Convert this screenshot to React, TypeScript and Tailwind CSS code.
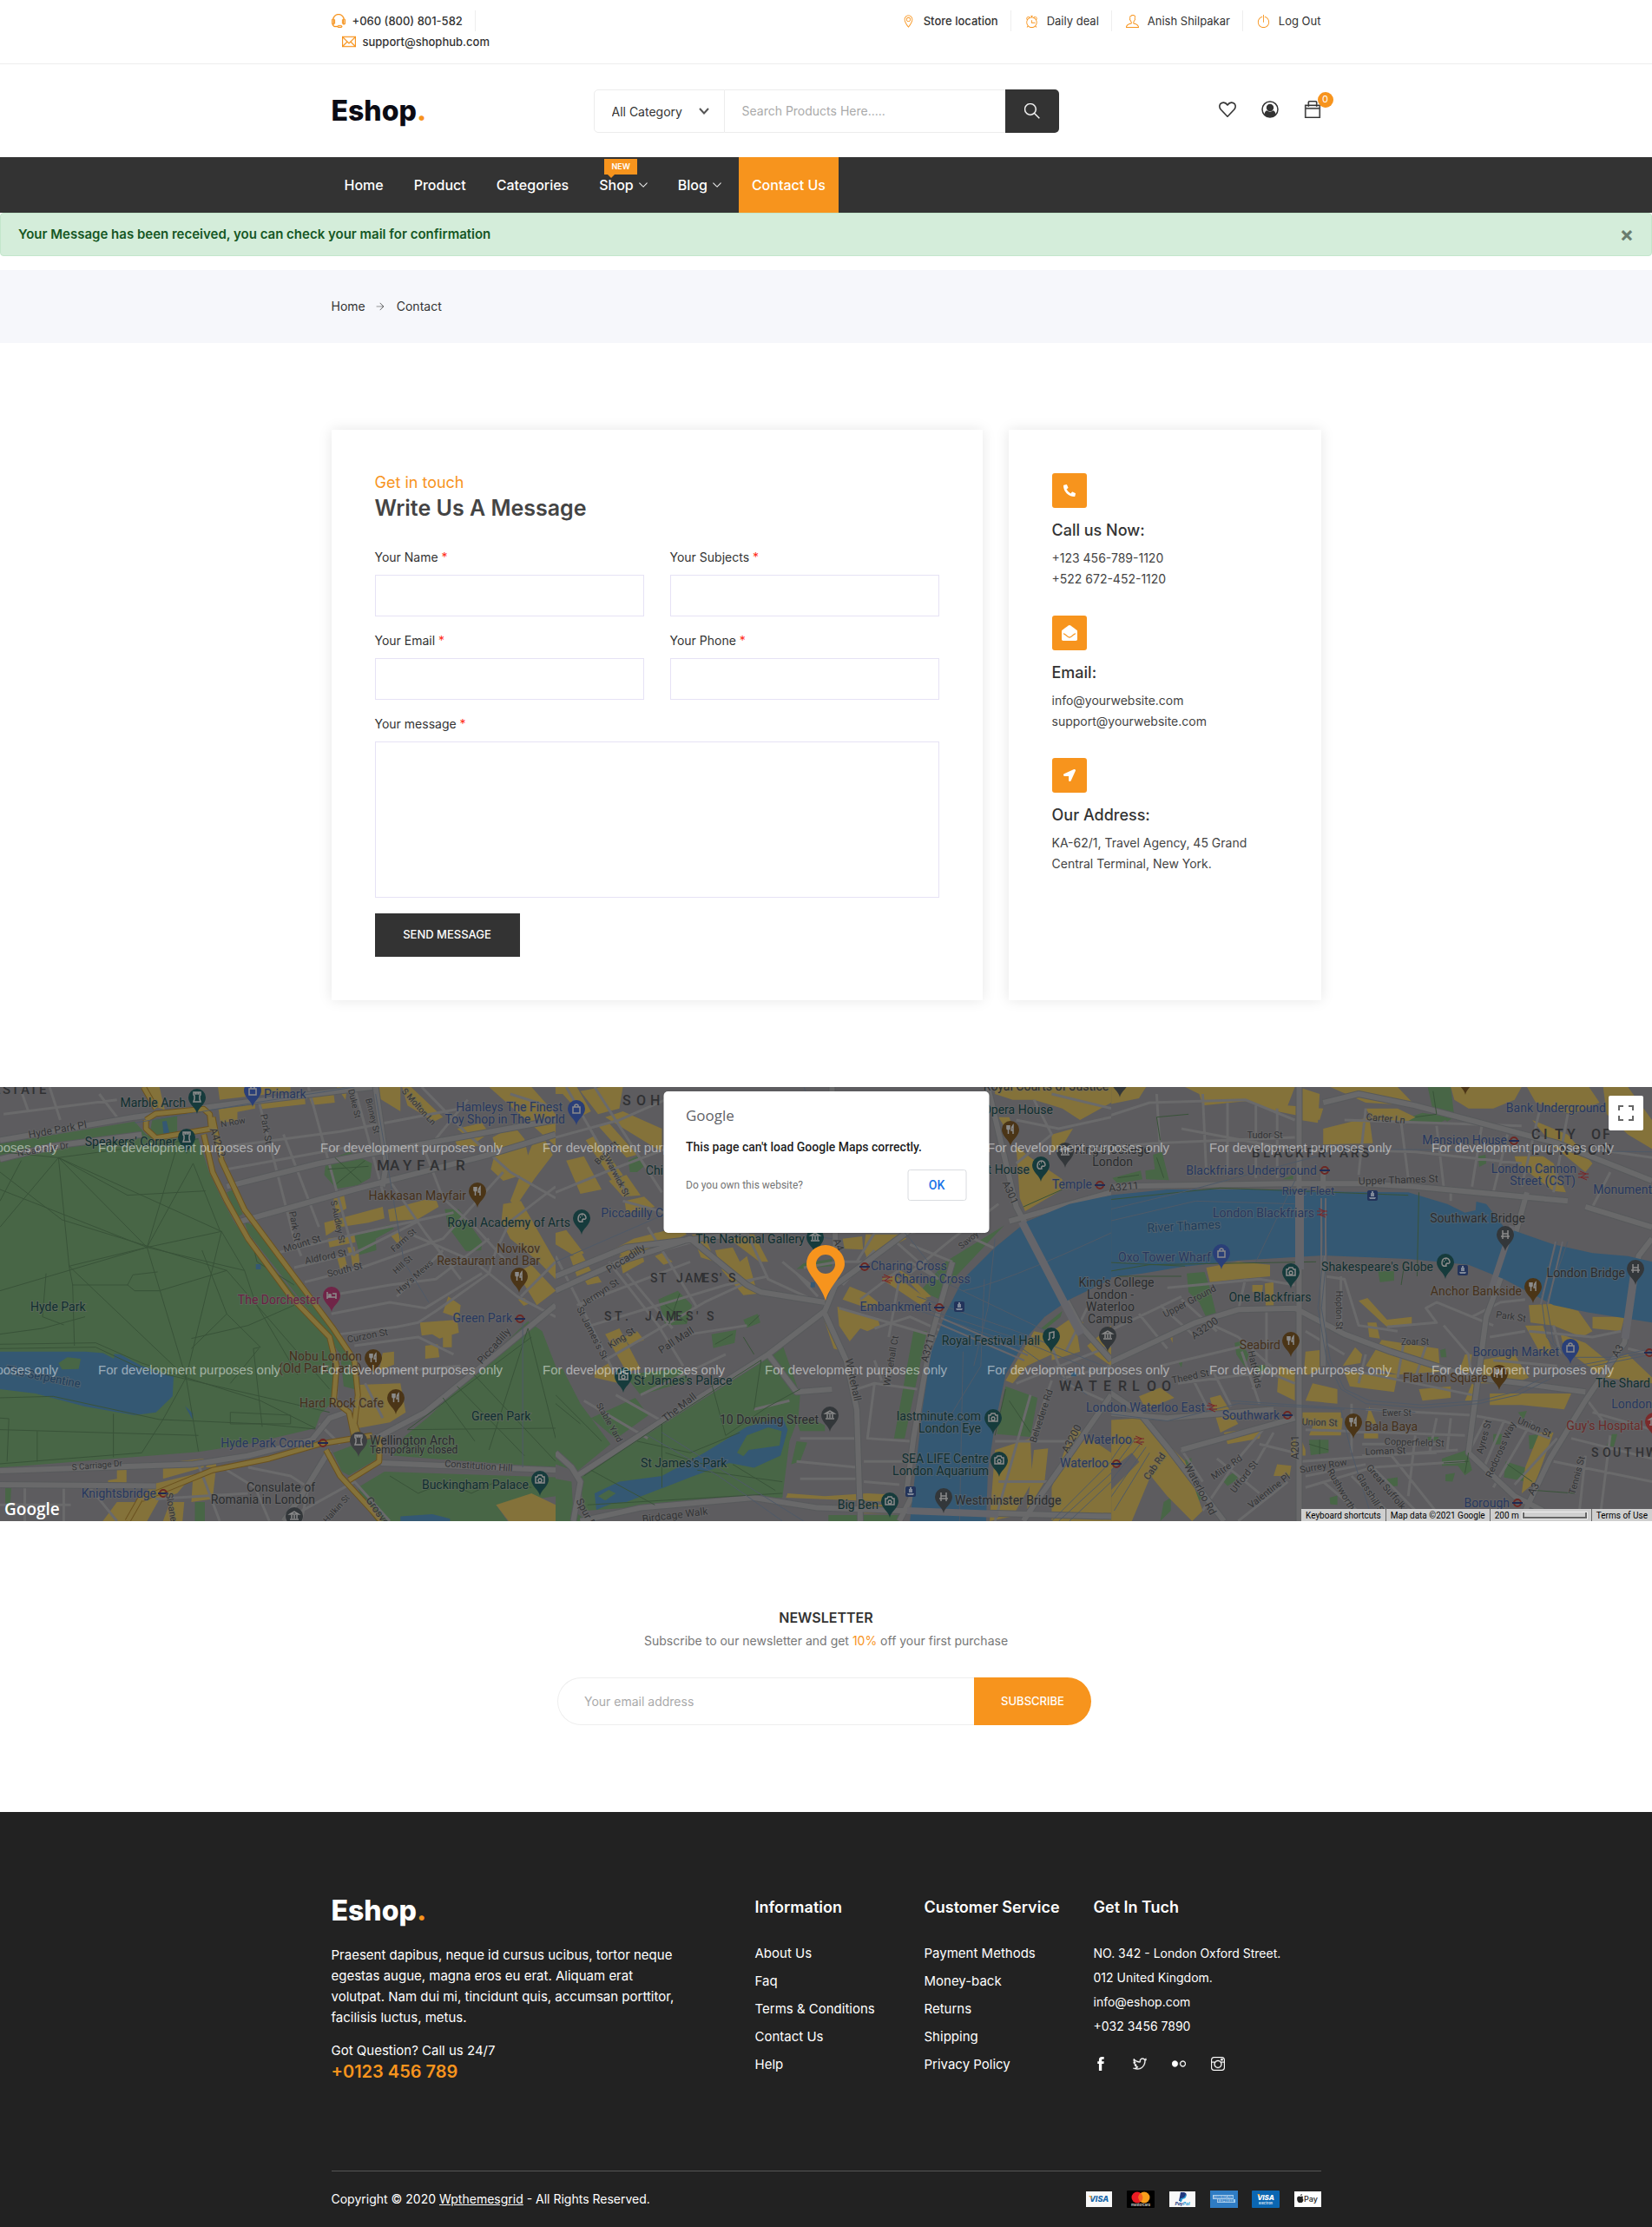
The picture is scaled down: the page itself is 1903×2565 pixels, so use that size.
import React from "react";
import {
  TfiAlarmClock,
  TfiAngleDown,
  TfiArrowRight,
  TfiBag,
  TfiEmail,
  TfiFacebook,
  TfiFlickr,
  TfiHeadphoneAlt,
  TfiInstagram,
  TfiLocationPin,
  TfiPowerOff,
  TfiSearch,
  TfiTwitter,
  TfiUser,
} from "react-icons/tfi";
import { FaEnvelopeOpen, FaLocationArrow, FaPhoneAlt } from "react-icons/fa";

/* ------------------------------------------------------------------ */
/* Map drawing: three sheets of 1568 x 1500 units side by side          */
/* ------------------------------------------------------------------ */

const SHEET_X = [0, 640, 1263];
const mapX = (sheet: number, x: number) => Math.round(SHEET_X[sheet] + x / 2.45);
const mapY = (y: number) => Math.round((y - 36) / 3);

type Sheet = {
  green: string;
  water: string;
  isle: string;
  yellow: string;
  bigRoads: string;
  roads: string;
  gold: string;
  paths: string;
  rails: string;
};

const SHEETS: Sheet[] = [
  {
    green:
      "M0,232L380,155L412,200L440,212L560,215L590,330L625,420L660,500L700,570L745,620L830,750L900,855L940,910L950,1000L942,1120L905,1165L890,1215L700,1270L560,1297L0,1352Z M430,148L500,135L500,200L445,207L425,180Z M920,290L985,260L1050,300L1045,350L1010,375L950,388L915,340Z M1000,545L1100,512L1112,525L1060,560L1062,600L1015,616Z M1255,458L1295,458L1360,570L1358,600L1315,604L1265,520Z M690,500L715,515L930,850L985,945L1003,1040L1000,1080L970,1070L960,960L905,860L700,540Z M640,400L655,392L685,475L670,485Z M1490,845L1530,880L1568,1000L1568,1352L1110,1310L1140,1245L1210,1175L1470,868Z M940,1300L1070,1240L1065,1320L985,1378L965,1365Z M1010,1420L1085,1365L1568,1385L1568,1450L1400,1480L1432,1536L1062,1536L1030,1480Z M550,1470H578V1536H550Z M15,1415H32L28,1500H15Z",
    water:
      "M0,950L240,950L340,960L400,1000L490,1035L487,1105L440,1160L380,1170L240,1140L100,1095L0,1080Z M458,155L470,153L478,195L462,200Z M722,648H736V666H722Z M522,1138L545,1165L543,1185Z M1130,1520L1220,1512L1270,1528V1536H1130Z",
    isle: "M165,990L190,970L228,975L222,1010L175,1012Z M290,955H322V975Z",
    yellow:
      "M615,36H820V52L620,80Z M615,100L720,85L720,110L670,122V152L622,160Z M735,92L860,72L862,95L740,112Z M868,60L940,45L945,90L880,98Z M950,36H980L975,80Z M1060,36H1130V120L1070,75Z M1135,36H1160L1250,140L1225,155L1150,100Z M400,36H450L465,115L440,105Z M940,415L970,405L978,455L950,475Z M915,505L1080,450L1085,490L1040,505L960,520L920,550Z M1095,460L1200,425L1232,430L1238,450L1180,492L1100,500Z M925,560L1000,545L1003,572L930,590Z M950,620L972,617L980,655L960,665Z M990,615L1012,612L1015,645L995,655Z M980,590L1000,588L1003,605L984,610Z M1100,545L1120,535L1138,565L1120,575Z M1280,210L1340,200L1350,240L1290,238Z M1390,210L1450,170L1480,215L1500,330L1420,360L1385,320L1400,250Z M1500,240L1530,200L1560,270L1510,350L1455,450L1440,430Z M1420,440L1470,430L1568,640L1568,700L1520,640L1440,560L1415,500Z M1470,670L1500,650L1568,740L1515,790L1480,720Z M1265,760L1300,790L1295,835L1250,815Z M1185,850L1290,840L1295,885L1240,905L1220,890L1190,895Z M1200,930L1235,925L1240,970L1200,975Z M1250,890H1275V935H1250Z M1080,955L1112,950L1112,995L1070,1015Z M1010,1065L1130,1060L1145,1160L1100,1195L1010,1215Z M460,1335L575,1320L575,1350L460,1390Z M305,1395L330,1390V1350L357,1348V1410H305Z M582,1325H610V1350H582Z M425,1410L545,1375L500,1440L450,1460L415,1536H290L330,1470H400Z M545,1375L608,1370L600,1460L540,1470Z M480,1470H520L515,1536H460Z M1400,1480L1500,1440L1568,1480V1536H1435Z M1330,36H1380L1568,240V130L1500,36Z M1462,770L1480,765L1492,785L1478,792Z M1290,180L1360,160L1380,195L1340,230Z",
    bigRoads:
      "M0,220L380,140L650,95L1050,36 M0,285L150,240L400,200 M0,1362L540,1340L700,1310L880,1255L930,1180L1000,1150 M0,1410L440,1415 M640,380L900,300L1160,240L1568,150 M680,500L1000,390L1380,270L1568,200 M1568,790L1400,960L1200,1160L1060,1250 M1075,1335L1568,1360 M930,1290L850,1450L800,1536 M1060,36L1090,300L1080,380",
    roads:
      "M720,36L830,560L850,620 M800,200L900,520 M870,36L1000,620 M1000,36L1085,420 M650,240L960,190L1300,110 M640,320L1000,240 M780,610L1000,545L1280,470 M830,660L1000,610L1180,500 M860,710L1020,660L1250,560L1420,330 M1100,360L1200,540L1300,700 M1120,760L1250,600 M960,750L1100,720L1230,700L1380,560 M935,820L1100,780L1200,800L1360,680 M960,890L1120,865L1180,850L1230,810L1380,680 M1000,930L1180,900L1280,960 M1150,540L1340,640L1460,760L1568,830 M1320,80L1200,260L1250,420L1340,520L1430,640 M1190,36L1320,200L1440,330L1568,420 M1568,380L1440,500L1400,600L1380,680 M140,36L170,150 M280,60L330,140 M60,50L80,120 M10,130L330,80 M560,1340L620,1536 M640,1360L720,1420L760,1536 M700,1350L820,1380L870,1420L850,1536 M440,1460L700,1440 M70,1415V1536 M180,1415V1536 M0,1480H200 M250,1415L330,1536 M1030,1060L1080,1180 M1100,1020L1300,1000 M950,1060V1110 M1470,760L1568,640 M900,1200L960,1270 M800,1536L1000,1400L1100,1536 M1440,60L1568,110",
    gold:
      "M412,150L440,128L575,112L592,130L596,180L440,212L412,180L412,150 M575,200L600,330L640,430L700,560L820,760L930,900L950,1000L942,1120L985,1160L1000,1250 M600,140L625,290L690,460L830,690L940,870L1000,980L1010,1100L1000,1200L1015,1250 M400,1460L600,1360L760,1320L900,1270L1050,1240 M920,1290L960,1380L1050,1500L1075,1536 M1072,1245L1070,1330L985,1395 M440,110L405,36 M400,1450L360,1536",
    paths:
      "M415,590L0,390 M415,590L165,280L0,520 M415,590L0,740 M415,590L625,535 M415,590L545,300 M415,590L195,655L205,720L210,930 M415,590L525,1040 M415,590L690,670 M415,590L500,240 M165,280L360,410L580,395 M165,280L625,535L525,1040 M195,655L165,280 M195,655L525,1040L460,1185 M0,330L175,495L640,670 M205,720L360,720L380,740L450,740L640,670 M360,720L375,685L445,675 M525,1040L560,1295 M525,1040L735,1120L890,1215 M735,935L640,820L570,600 M735,935L715,940L740,1210 M0,890L120,870L240,830 M0,925L270,920L400,990L525,1040 M0,940L270,935L400,1010L930,1160 M130,680L120,830L180,858 M0,1110L150,1105L450,1185L735,1200L890,1218 M0,1180L25,1182L20,1330 M320,1165V1315 M105,1225V1330 M0,1220L560,1240 M0,1338L400,1300L460,1185 M625,535L690,670L720,780L840,1030 M540,905L700,860L830,790 M540,940L640,820 M650,1060L730,940 M640,670L930,1080 M650,1160L820,1170V1200H650Z M710,560L725,640L830,720 M545,300L620,530 M0,260L165,280L560,215 M60,290L0,430 M1490,870L1380,1290 M1490,870L1568,1250 M1500,900L1150,1220 M1290,1070L1480,1310 M1150,1220L1568,1215 M1330,1020L1568,1330 M1250,1110L1340,1260 M1100,1380L1180,1440L1260,1400L1330,1440L1400,1400L1500,1420 M925,320L1040,310 M945,280L1020,365 M1030,290L950,370",
    rails: "M380,160L720,90L1000,36 M1475,840V1350 M1060,60L1140,640L1210,780",
  },
  {
    green:
      "M310,1170L600,965L640,925L690,1100L685,1180L660,1260L640,1455L80,1500L70,1400L60,1370Z M0,1005L20,1010L70,1130L155,1270L60,1365L0,1340Z M0,1390L45,1400L50,1500L90,1536H0Z M1265,515L1130,690L1085,770L1030,740L1100,640Z M1010,880L1048,880L985,1250L955,1250Z M290,770L345,740L385,790L370,855L310,860Z M440,890L510,875L505,920L445,938Z M530,840L570,820L578,850L540,868Z M1270,1070L1360,1110L1340,1245L1245,1235Z M195,1030L350,1010L380,1050L240,1100Z M100,1180L225,1110L262,1170L170,1252Z M205,290L230,275L250,310L230,330H210Z M680,1190L720,1180L760,1205V1225H690Z M680,1260L710,1265L690,1330L665,1340Z M700,645L780,630V655L680,665Z M770,1515H970V1536H770Z M1370,870L1430,810L1425,830L1380,875Z",
    water:
      "M1568,410L1450,440L1330,500L1240,590L1150,700L1100,820L1060,950L1035,1150L1000,1536L1215,1536L1220,1360L1240,1200L1270,1030L1330,900L1380,830L1450,770L1568,700Z M110,1440L180,1400L300,1380L420,1300L540,1210L640,1175L655,1220L635,1310L560,1352L490,1335L380,1385L200,1470L160,1475L115,1497Z M720,710H732V728H720Z M1455,1022H1470V1036H1455Z",
    isle: "M512,1300L540,1240L600,1212L638,1225L632,1275L545,1290L530,1312Z M120,1450L150,1428L170,1440L140,1465Z",
    yellow:
      "M0,36H60L100,120L75,135L20,60H0Z M70,50L130,36H190L180,110L120,130Z M140,140L190,120L300,180V260L220,200Z M30,290L80,275L130,390L70,405Z M85,220L110,205L190,340L160,360Z M120,170L150,160L230,270L200,280Z M150,360L200,340L240,410L190,415Z M0,540L30,530L80,610L60,625L0,580Z M40,620L75,615L100,670L60,690Z M180,620L240,585L250,640L190,680Z M160,600L220,560L350,520L370,545L290,590L210,630Z M195,430L250,415L280,450L200,475Z M280,540L340,530L350,560L280,590Z M385,545L420,545L450,640L410,625Z M450,600L500,590L520,640L540,620L570,750L530,755L470,670Z M490,560L520,545H560L600,640L575,640Z M810,560L865,552L868,598L815,595Z M875,545H980L990,560L880,630L870,600Z M920,700L950,680L1050,770L1030,790Z M960,660L1000,690L1060,760L1040,765Z M810,770L830,725L880,750L915,785L880,800Z M795,795L910,840L915,860L880,880L860,870L830,915L800,860Z M755,830L770,820L800,945L785,940Z M80,700L120,690L130,710L90,720Z M140,890L180,870L240,1010L200,1020Z M110,1020L150,990L170,1030L180,1060L110,1040Z M190,900L230,880L250,910L210,930Z M1240,36H1568V90L1480,150L1430,110L1350,80L1290,80L1240,60Z M1250,140H1280L1300,200L1270,180Z M1300,240L1340,280L1430,355L1430,390L1325,465L1310,420Z M1400,200L1460,180L1430,240L1400,260Z M1350,880L1390,890L1460,830L1490,850L1400,960L1330,1000L1290,1060L1270,1050Z M1400,890L1470,870L1480,950L1400,980Z M1500,930L1568,860V1000L1520,960Z M1240,1290L1340,1250L1345,1400L1290,1520L1225,1536Z M1350,1290L1390,1285L1380,1400L1330,1500Z M1460,1210L1568,1300V1536H1400L1400,1420Z M655,1440L760,1450L880,1440L960,1445V1470L650,1455Z M870,1480H960V1510H870Z M280,620L300,610L330,640L305,650Z",
    bigRoads:
      "M0,740L180,640L380,560L540,720L580,745L760,780 M60,1380L300,1190L600,960L760,810L790,720L1000,530 M600,960L680,1090L780,1080 M760,820L820,980L850,1150L860,1536 M50,1536L70,1400L45,1350L0,1300 M1010,1440L970,1536 M70,1536L240,1490L560,1455L740,1490L980,1500L1568,1520 M1280,500L1568,400 M1120,640L1060,900L1010,1250L990,1440 M1220,36L1300,450L1480,860L1568,980 M1568,1100L1460,1290L1350,1480L1320,1536 M790,600L780,36 M0,690L200,590L540,540",
    roads:
      "M30,36L200,400 M110,36L300,400 M0,210L180,150L310,80 M0,400L140,330L310,250 M190,430L310,470 M60,790L380,640 M140,980L420,780L560,700 M260,520L400,800 M150,640L290,860L360,1000 M300,600L420,560 M200,680L330,870 M0,620L100,860L180,1060 M100,860L480,720L600,690 M380,890L540,860 M240,1100L480,960 M80,1120L260,1250 M170,1100L300,1190 M540,540L600,700L760,790 M640,640L720,720 M680,680L740,760 M850,640L900,540L1000,540L1200,490 M880,640H800L700,660 M950,560L1080,700 M1000,580L1120,640 M810,720L900,600 M860,770L1000,640 M1080,700L1000,640 M800,800L1080,900 M900,870L1000,830L1090,880 M850,1080L900,1060L1020,1080 M900,1060L880,1250L1000,1260 M760,1250H860 M690,1250H850 M680,1330L850,1350 M870,1330H980 M870,1400L970,1410 M920,1050L900,980 M940,900L970,700 M690,1390H850 M560,1150L660,1120 M1300,1060L1568,930 M1240,1260L1480,1260 M1340,1100L1240,1536 M1400,1050L1340,1260 M1390,900L1440,1060L1568,1130 M1250,1400H1400 M1300,150L1420,180L1568,140 M1350,80L1400,200L1300,300 M1400,60L1568,110 M1430,240L1568,250 M1500,800L1440,950 M1568,1000L1440,1040 M1250,440L1120,560L1000,680 M1180,560L1250,600",
    gold: "",
    paths:
      "M80,1380L300,1200L580,980 M90,1480L640,1440 M440,1060L480,1240L600,1140L690,1080 M580,980L560,1150 M230,1260L380,1300L520,1230 M0,1130L70,1200 M0,1100L130,1260 M300,1200V1420 M100,1360L280,1480 M400,1360L640,1400 M500,1340L620,1430 M310,1300L420,1340 M450,925L500,890 M545,860L575,825 M310,790L370,850 M350,750L320,855 M1320,450L1430,390 M1270,1080L1240,1240 M1280,1120L1340,1230 M530,900L560,960",
    rails:
      "M700,30L740,200L1000,560L1090,700 M1020,760L1300,880L1568,1010 M1010,790L1290,900L1568,1040 M1030,810L1300,925L1500,1100 M1080,700L1420,900 M0,640L300,480L780,560 M260,1240L460,1380L640,1536 M300,1230L700,1536 M1150,950L1140,1536 M1210,700L1200,1000L1100,1200 M1150,740Q1250,720 1568,540 M1400,1536L1568,1330 M1420,1536L1568,1370 M1450,1536L1568,1400 M1240,560L1220,800L1180,1000",
  },
  {
    green:
      "M935,36H1000L1010,140L990,155L950,120Z M860,150L920,125L1000,140L960,165Z M160,270L185,260L205,358L140,355L138,325L165,320Z M45,350L125,325L130,355L60,370Z M1078,275L1098,270L1100,300L1080,312Z M795,672H840V705L800,710Z M255,680L305,675L320,730L340,830L315,845L290,780L260,745Z M390,920L405,915L430,960L420,1005L395,960Z M450,1000L480,995L485,1025L455,1030Z M230,985L243,985L240,1005Z M600,1255H655V1300L605,1308Z M975,1320L1045,1290L1060,1360L1040,1378L1020,1345L975,1345Z M1155,1330L1245,1365L1235,1405L1150,1385Z M985,1375L1012,1370L1005,1400L985,1398Z M1220,1240L1255,1235L1250,1280L1222,1288Z M1120,1235H1145L1140,1270L1120,1272Z M245,1400L305,1455L260,1480L240,1440Z M820,1390L850,1385V1415L822,1418Z M658,1455L680,1448V1480L660,1478Z M355,1395L390,1365L400,1390L370,1415Z M140,1115L165,1100L180,1120L150,1138Z M190,1470L210,1455V1500L180,1536Z M1190,1160L1215,1155L1205,1185Z M935,1245H965V1258H935Z M970,945L985,940L988,970L972,970Z M525,355L555,340V355Z M250,1325L268,1318V1345L255,1350Z M1455,1235H1470L1460,1280L1440,1275Z",
    water:
      "M0,415L200,390L560,390L700,398L880,400L990,440L1040,470L1070,462L1072,432L1100,440L1150,520L1290,580L1400,610L1500,620L1568,640V850L1390,815L1290,790L1150,700L1050,650L880,630L640,618L400,635L240,658L130,680L0,700Z",
    isle: "",
    yellow:
      "M20,36H140L120,75L0,105V60Z M250,36H560L540,100L640,110L630,150L510,120L420,85L300,100L290,60Z M570,36L630,60L625,160L575,150Z M640,180L770,140L780,230L640,235Z M660,36H850L900,100L760,90Z M760,110L850,110L900,140L870,160L780,150Z M1000,36H1200L1180,80L1120,110L1050,110L1010,80Z M1215,36L1390,36L1420,90L1340,130L1240,90Z M1430,36H1500L1568,150V250L1500,200L1440,130Z M1180,275H1260L1290,300L1325,400L1290,395L1185,300Z M1230,150L1330,200L1400,300L1380,330L1290,240Z M310,660L400,640L490,650V690L400,700L320,710Z M475,715L500,710V795H478Z M440,720L470,720L468,745H440Z M740,775L765,765L820,840L890,830V855L820,865Z M765,850H790L800,905L770,900Z M805,910L965,940L970,1020L850,1030L760,1000Z M695,1000L730,935L750,960L745,990Z M700,1020L850,1030L840,1090L715,1070Z M910,1080L1000,1070L1000,1110L920,1120Z M590,950L630,945V1010L600,1030H585Z M610,1060L680,1080V1130L590,1120Z M515,1000L560,1020V1120L510,1090Z M580,1160H690V1210L580,1200Z M620,1180L695,1180L690,1240L600,1240Z M755,1230H795V1250H755Z M550,1260L575,1245L590,1290V1310H550Z M1220,790L1290,785L1360,810L1400,880L1370,900L1290,860L1225,850Z M1400,830L1490,830L1480,880L1400,870Z M1210,860L1260,860L1290,960L1250,950Z M1310,890L1380,920L1470,1010L1420,1030L1320,940Z M1390,1000L1500,960L1568,1040V1060L1430,1040Z M1080,980L1180,960L1220,1040L1180,1060H1085Z M1040,960L1060,960L1050,1040L1020,1030Z M1110,1095H1340L1320,1150L1200,1135L1110,1135Z M0,1190L130,1180L250,1330L300,1500L270,1536L200,1450L100,1300L0,1400Z M120,1105L180,1075L220,1110L140,1150Z M320,1110L350,1100L400,1200L350,1230Z M360,1230L470,1210L460,1250L370,1270Z M0,1415L40,1430L130,1320L170,1330L100,1536H0Z M1250,1230H1290L1240,1400L1200,1440L1210,1350Z M1060,1060L1080,1080L1060,1120H1040Z M770,1140L790,1200L760,1200Z M200,880L215,900V920Z M510,1340L550,1345L545,1380H500Z",
    bigRoads:
      "M0,380L540,370L750,370L900,380L1330,430 M1380,450L1568,520 M572,36L572,1536 M0,1010L280,850L400,805L560,800L700,890L830,950L1060,1040L1200,1060L1380,1090 M1215,400L1170,600L1100,830L1060,1200L1050,1300L1180,1450L1260,1500 M1568,560L1530,620L1490,920L1380,1120L1280,1320L1210,1500 M0,1060L120,1160L200,1280L360,1536 M0,1160L200,1180L500,1150 M640,330V1000 M560,1180L240,1290 M640,90L740,60L900,100L1300,230L1568,360",
    roads:
      "M0,150L150,90L420,80L560,150 M170,60L180,260 M300,60L310,330 M370,90V340 M450,100V350 M510,110V350 M0,250L160,230L560,210 M240,180L500,240L640,260 M640,250L900,260L1200,300 M760,110L740,340 M860,160L880,350 M960,170L980,380 M1090,150L1060,380 M1160,200L1120,400 M700,150L1200,170 M1250,120L1200,380 M1330,130L1290,400 M1400,250L1568,280 M1450,330L1400,450 M1000,380L1000,430 M0,900L240,760 M120,820L200,940 M180,790L280,900 M240,770L340,880 M200,730L460,700L560,720 M420,700L400,810 M480,800V1010L440,1080 M500,1010L400,900L330,860 M230,1060L480,1020L560,1060 M180,1000L420,930 M270,1040L320,1160 M330,1020L380,1140 M410,950L460,1130 M690,690V880 M645,690L700,700L740,860L850,880 M820,865L960,850L930,800L960,780L1060,830L1120,860 M1060,830L1140,780L1210,770 M980,860L1050,960L1060,1050 M870,900L850,1040 M930,930L900,1040 M700,1010L1060,1100 M760,960L740,1060 M590,880L700,960 M720,1130V1300 M760,1150L1060,1170L1150,1190L1280,1250 M590,1220L1040,1240 M750,1270L980,1270 M750,1310L960,1300 M580,1330L1020,1290 M590,1420L780,1350L1040,1330 M590,1380L760,1340 M640,1400L770,1536 M720,1380L850,1536 M780,1350L930,1536 M820,1290L980,1536 M900,1240L880,1450 M960,1180L940,1300 M1000,1180L990,1290 M1100,1180L1050,1300 M1150,1190L1090,1360 M1230,1190L1120,1420 M1300,1250L1180,1410 M300,1500L400,1320L470,1220 M400,1536L540,1400 M460,1270L560,1300 M340,1320L460,1440 M240,1290L300,1400 M500,1230L420,1400 M1290,1330L1568,1400 M1340,1250L1568,1320 M1400,1160L1568,1220 M1380,1310L1360,1536 M1450,1240L1420,1536 M1120,980L1300,1000 M1110,900L1210,880 M1380,1110L1430,1190 M1290,860L1310,960 M1220,880L1400,900L1480,880 M1568,960L1500,940",
    gold: "",
    paths:
      "M950,50L960,130L900,140 M170,280L190,350 M60,350L120,340 M600,1270L655,1290 M630,1255V1305 M980,1335L1050,1330 M1050,1300L1040,1370 M1160,1340L1230,1400 M180,220L170,140L260,130 M0,430L350,385L880,410 M910,400L905,690 M0,640L250,655 M0,680L150,650L620,640 M870,640L860,720 M1240,1430L1350,1440 M60,690L240,690",
    rails:
      "M635,440L640,620L625,800L650,980L690,1080L760,1130L920,1145L1080,1130L1190,1100L1320,1020L1568,960 M645,440L650,620L635,800L660,980L700,1080L770,1120L920,1135L1080,1120L1180,1090L1310,1010L1568,950 M380,1120L690,1145L900,1160 M0,1160L200,1190L400,1130L700,1150 M690,1150L720,1300L780,1536 M1330,570L1270,780L1290,920L1330,970L1450,970L1568,940 M1300,570L1255,760L1270,900L1310,960 M0,510L280,430L560,440 M450,640L560,360 M0,470L240,400L700,250L1568,260 M0,1400L90,1240 M0,1430L110,1250 M0,1460L130,1260 M20,1490L140,1280 M50,1500L150,1300",
  },
];

type Label = [sheet: number, x: number, y: number, text: string, color: string, size?: number, anchor?: "start" | "middle" | "end", rotate?: number];

const TEAL = "#102f30";
const GREY = "#2a2c2e";
const BLUE = "#27385f";
const BROWN = "#44301a";
const ROAD = "#333436";

const LABELS: Label[] = [
  [0, 525, 104, "Marble Arch", TEAL, 14, "end"],
  [0, 497, 240, "Speakers' Corner", TEAL, 14, "end"],
  [0, 745, 76, "Primark", BLUE, 14],
  [0, 163, 196, "Hyde Park Pl", ROAD, 12, "middle", -10],
  [0, 122, 262, "N Carriage Dr", ROAD, 10, "middle", -9],
  [0, 660, 168, "N Row", ROAD, 10, "middle", -10],
  [0, 742, 182, "Park St", ROAD, 11, "middle", 80],
  [0, 606, 230, "A4202", ROAD, 12, "middle", 72],
  [0, 992, 95, "Duke St", ROAD, 10, "middle", 76],
  [0, 1044, 137, "Binney St", ROAD, 10, "middle", 76],
  [0, 1176, 112, "S Molton Ln", ROAD, 10, "middle", 48],
  [1, 20, 120, "Hamleys The Finest", BLUE, 14, "end"],
  [1, 27, 162, "Toy Shop in The World", BLUE, 14, "end"],
  [0, 1316, 425, "Hakkasan Mayfair", BROWN, 14, "end"],
  [1, 42, 518, "Royal Academy of Arts", TEAL, 14, "end"],
  [0, 1523, 608, "Novikov", BROWN, 14, "end"],
  [0, 1523, 650, "Restaurant and Bar", BROWN, 14, "end"],
  [0, 905, 785, "The Dorchester", "#6b2243", 14, "end"],
  [0, 85, 810, "Hyde Park", TEAL, 14],
  [0, 1446, 850, "Green Park", BLUE, 14, "end"],
  [0, 1022, 982, "Nobu London", BROWN, 14, "end"],
  [0, 1022, 1022, "(Old Park Lane)", BROWN, 14, "end"],
  [0, 1083, 1142, "Hard Rock Cafe", BROWN, 14, "end"],
  [0, 1330, 1187, "Green Park", TEAL, 14],
  [0, 890, 1280, "Hyde Park Corner", BLUE, 14, "end"],
  [0, 1044, 1272, "Wellington Arch", GREY, 14],
  [0, 1044, 1303, "Temporarily closed", GREY, 12],
  [0, 440, 1454, "Knightsbridge", BLUE, 14, "end"],
  [0, 889, 1434, "Consulate of", GREY, 14, "end"],
  [0, 889, 1476, "Romania in London", GREY, 14, "end"],
  [0, 1493, 1424, "Buckingham Palace", TEAL, 14, "end"],
  [0, 1350, 1355, "Constitution Hill", ROAD, 11, "middle", 4],
  [0, 275, 1352, "S Carriage Dr", ROAD, 10, "middle", -5],
  [0, 120, 1050, "The Serpentine", "#1c3d5c", 13, "middle", 11],
  [0, 855, 588, "Mount St", ROAD, 11, "middle", -17],
  [0, 920, 632, "Aldford St", ROAD, 11, "middle", -12],
  [0, 975, 678, "South St", ROAD, 11, "middle", -14],
  [0, 945, 505, "S Audley St", ROAD, 10, "middle", 78],
  [0, 822, 520, "Park St", ROAD, 11, "middle", 80],
  [0, 1145, 572, "Farm St", ROAD, 10, "middle", -42],
  [0, 1142, 656, "Hill St", ROAD, 10, "middle", -42],
  [0, 1176, 700, "Hay's Mews", ROAD, 10, "middle", -42],
  [0, 1040, 905, "Curzon St", ROAD, 11, "middle", -11],
  [0, 1402, 940, "Piccadilly", ROAD, 12, "middle", -48],
  [0, 478, 1510, "Sloane St", ROAD, 11, "middle", 80],
  [0, 955, 1500, "Halkin St", ROAD, 10, "middle", -48],
  [0, 1070, 1530, "Grosvenor", ROAD, 12, "middle", 54],
  [1, 305, 340, "Chi", TEAL, 14, "end"],
  [1, 305, 487, "Piccadilly C", BLUE, 14, "end"],
  [1, 702, 576, "The National Gallery", TEAL, 14, "end"],
  [1, 204, 640, "Piccadilly", ROAD, 12, "middle", -33],
  [1, 130, 756, "Jermyn St", ROAD, 11, "middle", -33],
  [1, 95, 890, "St James's St", ROAD, 11, "middle", 63],
  [1, 190, 912, "King St", ROAD, 11, "middle", -33],
  [1, 345, 922, "Pall Mall", ROAD, 12, "middle", -33],
  [1, 356, 1152, "The Mall", ROAD, 12, "middle", -38],
  [1, 145, 1200, "Stable Yard", ROAD, 10, "middle", 60],
  [1, 166, 350, "Warwick St", ROAD, 10, "middle", 62],
  [1, 150, 270, "Beak St", ROAD, 10, "middle", -45],
  [1, 890, 670, "Charing Cross", BLUE, 14],
  [1, 956, 713, "Charing Cross", BLUE, 14],
  [1, 1062, 811, "Embankment", BLUE, 14, "end"],
  [1, 1368, 926, "Royal Festival Hall", TEAL, 14, "end"],
  [1, 1060, 940, "A3211", ROAD, 12, "middle", -75],
  [1, 955, 985, "Whitehall Ct", ROAD, 11, "middle", -80],
  [1, 830, 1050, "Whitehall", ROAD, 12, "middle", 78],
  [1, 1275, 405, "A301", ROAD, 12, "middle", 66],
  [1, 790, 585, "A4", ROAD, 12, "middle", 70],
  [1, 1180, 560, "Savoy Pl", ROAD, 10, "middle", -40],
  [1, 1200, 1187, "lastminute.com", TEAL, 14, "end"],
  [1, 1200, 1229, "London Eye", TEAL, 14, "end"],
  [1, 1223, 1334, "SEA LIFE Centre", TEAL, 14, "end"],
  [1, 1223, 1376, "London Aquarium", TEAL, 14, "end"],
  [1, 742, 1199, "10 Downing Street", GREY, 14, "end"],
  [1, 220, 1064, "St James's Palace", TEAL, 14],
  [1, 240, 1349, "St James's Park", TEAL, 14],
  [1, 911, 1495, "Big Ben", TEAL, 14, "end"],
  [1, 1127, 1480, "Westminster Bridge", GREY, 14],
  [1, 337, 1526, "Birdcage Walk", ROAD, 12, "middle", -7],
  [1, 82, 1520, "Spur Rd", ROAD, 12, "middle", 62],
  [1, 1380, 1175, "Belvedere Rd", ROAD, 11, "middle", -72],
  [1, 1465, 1258, "A3200", ROAD, 12, "middle", -62],
  [1, 1403, 128, "Opera House", TEAL, 14, "end"],
  [1, 1338, 335, "Somerset House", TEAL, 14, "end"],
  [1, 1515, 388, "Temple", BLUE, 14, "end"],
  [1, 1385, 48, "Royal Courts of Justice", GREY, 14, "middle"],
  [2, 152, 266, "King's College", GREY, 14, "end"],
  [2, 103, 308, "London", GREY, 14, "end"],
  [2, 476, 213, "Tudor St", ROAD, 11, "middle"],
  [2, 816, 155, "Carter Ln", ROAD, 11, "middle", 5],
  [2, 622, 338, "Blackfriars Underground", BLUE, 14, "end"],
  [2, 598, 407, "River Fleet", BLUE, 13, "middle"],
  [2, 616, 485, "London Blackfriars", BLUE, 14, "end"],
  [2, 248, 530, "River Thames", "#1c3d5c", 14, "middle", -3],
  [2, 323, 638, "Oxo Tower Wharf", BLUE, 14, "end"],
  [2, 490, 776, "One Blackfriars", TEAL, 14, "middle"],
  [2, 951, 671, "Shakespeare's Globe", TEAL, 14, "end"],
  [2, 1210, 503, "Southwark Bridge", GREY, 14, "end"],
  [2, 1200, 756, "Anchor Bankside", BROWN, 14, "end"],
  [2, 1491, 692, "London Bridge", GREY, 14, "end"],
  [2, 852, 368, "Upper Thames St", ROAD, 12, "middle", -2],
  [2, 78, 393, "A3211", ROAD, 12, "middle", -6],
  [2, 1158, 234, "Mansion House", BLUE, 14, "end"],
  [2, 1437, 122, "Bank Underground", BLUE, 14, "end"],
  [2, 1356, 334, "London Cannon", BLUE, 14, "end"],
  [2, 1353, 374, "Street (CST)", BLUE, 14, "end"],
  [2, 1568, 404, "Monument", BLUE, 14, "end"],
  [2, 57, 725, "King's College", GREY, 14, "middle"],
  [2, 40, 767, "London -", GREY, 14, "middle"],
  [2, 38, 810, "Waterloo", GREY, 14, "middle"],
  [2, 38, 851, "Campus", GREY, 14, "middle"],
  [2, 519, 941, "Seabird", BROWN, 14, "end"],
  [2, 268, 785, "Upper Ground", ROAD, 11, "middle", -28],
  [2, 310, 880, "A3200", ROAD, 12, "middle", -35],
  [2, 677, 808, "Hopton St", ROAD, 10, "middle", 90],
  [2, 898, 926, "Zoar St", ROAD, 10, "middle"],
  [2, 1168, 840, "Park St", ROAD, 11, "middle", 8],
  [2, 1307, 965, "Borough Market", BLUE, 14, "end"],
  [2, 1105, 1056, "Flat Iron Square", BROWN, 14, "end"],
  [2, 1562, 1073, "The Shard", TEAL, 14, "end"],
  [2, 1568, 1147, "London", BLUE, 14, "end"],
  [2, 1543, 1221, "Guy's Hospital", "#6b2a28", 14, "end"],
  [2, 306, 1157, "London Waterloo East", BLUE, 14, "end"],
  [2, 518, 1184, "Southwark", BLUE, 14, "end"],
  [2, 756, 1224, "Bala Baya", BROWN, 14],
  [2, 268, 1048, "Theed St", ROAD, 11, "middle", -12],
  [2, 438, 1015, "Hatfields", ROAD, 11, "middle", 78],
  [2, 848, 1173, "Ewer St", ROAD, 10, "middle"],
  [2, 630, 1207, "Union St", ROAD, 11, "middle", 2],
  [2, 897, 1276, "Copperfield St", ROAD, 11, "middle", 2],
  [2, 816, 1306, "Loman St", ROAD, 11, "middle", -2],
  [2, 642, 1355, "Surrey Row", ROAD, 11, "middle", -10],
  [2, 572, 1280, "A201", ROAD, 12, "middle", -90],
  [2, 285, 1430, "Waterloo Rd", ROAD, 12, "middle", 62],
  [2, 172, 1352, "Cab Rd", ROAD, 11, "middle", -55],
  [2, 372, 1358, "Mitre Rd", ROAD, 11, "middle", -35],
  [2, 424, 1388, "Ufford St", ROAD, 11, "middle", -52],
  [2, 492, 1440, "Valentine Pl", ROAD, 11, "middle", -38],
  [2, 692, 1450, "Rushworth St", ROAD, 11, "middle", 60],
  [2, 768, 1450, "Glasshill St", ROAD, 11, "middle", 58],
  [2, 820, 1440, "Great Suffolk St", ROAD, 11, "middle", 50],
  [2, 1102, 1248, "Ayres St", ROAD, 11, "middle", -75],
  [2, 1148, 1292, "Redcross Way", ROAD, 11, "middle", -66],
  [2, 1232, 1222, "Union St", ROAD, 11, "middle", 24],
  [2, 1364, 1380, "Tennis St", ROAD, 11, "middle", -75],
  [2, 1165, 1487, "Borough", BLUE, 14, "end"],
  [2, 1242, 1432, "A3", ROAD, 12, "middle", -60],
  [2, 1480, 955, "A3", ROAD, 12, "middle", -60],
  [2, 100, 1270, "Waterloo", BLUE, 14, "end"],
  [2, 35, 1351, "Waterloo", BLUE, 14, "end"],
];

const DISTRICTS: [number, number, number, string, number, number][] = [
  [0, -20, 60, "ESTATE", 15, 60],
  [0, 1064, 323, "MAYFAIR", 17, 102],
  [1, 188, 100, "SOHO", 16, 60],
  [1, 266, 710, "ST JAMES'S", 14, 97],
  [1, 137, 843, "ST. JAMES'S", 14, 126],
  [1, 1420, 1085, "WATERLOO", 16, 130],
  [2, 438, 280, "BLACKFRIARS", 15, 135],
  [2, 1228, 215, "CITY OF", 16, 92],
  [2, 1228, 270, "LONDON", 16, 92],
  [2, 1397, 1313, "SOUTHWARK", 14, 110],
];

type Glyph = "fork" | "camera" | "castle" | "bag" | "bed" | "bank" | "art" | "bridge" | "music";

const PINS: [number, number, number, string, Glyph][] = [
  [0, 555, 130, "#163b3c", "castle"],
  [0, 527, 268, "#163b3c", "castle"],
  [0, 714, 104, "#2a3f78", "bag"],
  [0, 1348, 452, "#4b3517", "fork"],
  [0, 1466, 748, "#4b3517", "fork"],
  [0, 937, 812, "#702548", "bed"],
  [0, 1054, 1028, "#4b3517", "fork"],
  [0, 1116, 1168, "#4b3517", "fork"],
  [0, 1012, 1313, "#3d3f42", "castle"],
  [0, 1525, 1450, "#163b3c", "camera"],
  [0, 831, 1574, "#33373a", "bank"],
  [1, 60, 167, "#2a3f78", "bag"],
  [1, 73, 546, "#163b3c", "art"],
  [1, 733, 612, "#163b3c", "bank"],
  [1, 190, 1091, "#163b3c", "camera"],
  [1, 1284, 241, "#4b3517", "fork"],
  [1, 1370, 362, "#163b3c", "art"],
  [1, 1400, 953, "#163b3c", "music"],
  [1, 773, 1226, "#33373a", "bank"],
  [1, 1234, 1236, "#163b3c", "camera"],
  [1, 1253, 1384, "#163b3c", "camera"],
  [1, 944, 1524, "#163b3c", "camera"],
  [1, 1096, 1508, "#33373a", "bridge"],
  [1, 1438, 314, "#33373a", "bank"],
  [2, 354, 666, "#2a3f78", "bag"],
  [2, 550, 732, "#163b3c", "camera"],
  [2, 984, 698, "#163b3c", "art"],
  [2, 1155, 603, "#33373a", "bridge"],
  [2, 1233, 783, "#4b3517", "fork"],
  [2, 1522, 719, "#33373a", "bridge"],
  [2, 33, 950, "#33373a", "bank"],
  [2, 550, 968, "#4b3517", "fork"],
  [2, 1338, 993, "#2a3f78", "bag"],
  [2, 1138, 1082, "#4b3517", "fork"],
  [2, 726, 1250, "#4b3517", "fork"],
  [2, 67, 72, "#33373a", "bank"],
  [2, 1042, 62, "#4b3517", "fork"],
  [2, 1572, 1248, "#7a2a2a", "bank"],
];

const UNDERGROUND: [number, number, number][] = [
  [0, 1467, 837], [0, 911, 1266], [0, 460, 1440],
  [1, 872, 657], [1, 1083, 798], [1, 1536, 375],
  [2, 645, 324], [2, 1179, 222], [2, 539, 1170], [2, 56, 1338], [2, 1188, 1473], [2, 1560, 954],
];

const RAIL: [number, number, number][] = [
  [1, 936, 700], [2, 637, 472], [2, 1375, 343], [2, 326, 1144], [2, 120, 1258],
];

const FERRIES: [number, number, number][] = [
  [1, 1140, 794], [1, 1003, 1435], [2, 780, 412], [2, 1035, 670],
];

const GLYPHS: Record<Glyph, string> = {
  fork: "M-4,-24v4q0,1 1.500,1v5M-2.500,-24v5M-1,-24v4q0,1 -1.500,1M3,-14v-10q-2,2 -2,6h2",
  camera: "M-5,-22h2l1,-2h4l1,2h2v7h-10zM0,-20a2,2 0 1 0 .1,0z",
  castle: "M-4,-25v3l1,1v4l-1,3h8l-1,-3v-4l1,-1v-3h-2v2h-1v-2h-2v2h-1v-2z",
  bag: "M-4,-21h8v7h-8zM-2,-21v-2q2,-2 4,0v2",
  bed: "M-5,-23v8M-5,-17h10v2M-3,-20h2v2h-2zM1,-21h4v4",
  bank: "M-5,-21l5,-3l5,3zM-3,-20v4M0,-20v4M3,-20v4M-5,-15h10",
  art: "M-4,-18q0,-6 5,-6q4,1 4,5q-1,2 -3,1q-2,1 -1,3q-5,1 -5,-3zM-2,-20h1M0,-22h1",
  bridge: "M-3,-24v10M3,-24v10M-5,-17h10M-3,-20h6",
  music: "M-2,-15v-8l5,-1v7M-2,-15h-2M3,-17h-2",
};

function MapDrawing() {
  return (
    <svg
      className="block h-full w-full"
      viewBox="0 0 1903 500"
      preserveAspectRatio="xMidYMid slice"
      role="img"
      aria-label="Street map of central London"
      fontFamily="Roboto, sans-serif"
    >
      <defs>
        <clipPath id="sheet0"><rect x="0" y="36" width="1568" height="1500" /></clipPath>
        <clipPath id="sheet1"><rect x="0" y="36" width="1568" height="1500" /></clipPath>
        <clipPath id="sheet2"><rect x="42" y="36" width="1530" height="1500" /></clipPath>
      </defs>
      <rect width="1903" height="500" fill="#5d5c5f" />
      {SHEETS.map((s, i) => (
        <g key={i} transform={`translate(${SHEET_X[i]} -12) scale(0.4082 0.3333)`} fill="none" clipPath={`url(#sheet${i})`}>
          <path d={s.green} fill="#486646" />
          <path d={s.yellow} fill="#84723a" />
          <g strokeLinejoin="round">
            <path d={s.roads} stroke="#6a6a6b" strokeWidth="3" vectorEffect="non-scaling-stroke" />
            <path d={s.bigRoads} stroke="#585a5c" strokeWidth="8" vectorEffect="non-scaling-stroke" />
            <path d={s.bigRoads} stroke="#69696a" strokeWidth="6" vectorEffect="non-scaling-stroke" />
          </g>
          <path d={s.water} fill="#345873" />
          <path d={s.isle} fill="#486646" />
          <path d={s.paths} stroke="#395339" strokeWidth="1" vectorEffect="non-scaling-stroke" />
          <path d={s.gold} stroke="#6b5220" strokeWidth="7" strokeLinejoin="round" vectorEffect="non-scaling-stroke" />
          <path d={s.gold} stroke="#84723a" strokeWidth="5" strokeLinejoin="round" vectorEffect="non-scaling-stroke" />
          <path d={s.rails} stroke="#4f5a68" strokeWidth="1" vectorEffect="non-scaling-stroke" />
        </g>
      ))}
      {/* Bridges over the river */}
      <g fill="none" stroke="#65656a">
        <path d="M1177,155L1245,285" strokeWidth="9" />
        <path d="M1497,120V210" strokeWidth="10" />
        <path d="M1742,160L1717,235" strokeWidth="7" />
        <path d="M1884,205L1872,290" strokeWidth="9" />
        <path d="M1045,488L1150,492" strokeWidth="8" />
        <path d="M1522,128V208M1527,128V208M1792,178L1775,250M1800,178L1783,250M1080,272L1180,315M1084,266L1184,309" strokeWidth="2" />
      </g>
      {UNDERGROUND.map(([s, x, y], i) => (
        <g key={i} transform={`translate(${mapX(s, x)} ${mapY(y)})`} fill="none">
          <circle r="4" stroke="#6d2723" strokeWidth="2" />
          <path d="M-6,0H6" stroke="#202a52" strokeWidth="2" />
        </g>
      ))}
      {RAIL.map(([s, x, y], i) => (
        <path key={i} transform={`translate(${mapX(s, x)} ${mapY(y)})`} d="M-6,-2H6M-6,2H6M-4,-5L3,-2L-3,2L4,5" fill="none" stroke="#7a2427" strokeWidth="1" />
      ))}
      {FERRIES.map(([s, x, y], i) => (
        <g key={i} transform={`translate(${mapX(s, x)} ${mapY(y)})`}>
          <rect x="-6" y="-6" width="12" height="12" rx="2" fill="#22335a" />
          <path d="M-4,2H4L3,4H-3ZM-2,-3H2V1H-2ZM-1,-5H1V-3H-1Z" fill="#7f8898" />
        </g>
      ))}
      {DISTRICTS.map(([s, x, y, text, size, width], i) => (
        <text key={i} x={Array.from(text, (_, n) => mapX(s, x) + Math.round((n * width) / (text.length - 0.3))).join(" ")} y={mapY(y)} fontSize={size} fontWeight="500" fill="#303133">
          {text}
        </text>
      ))}
      {LABELS.map(([s, x, y, text, color, size = 14, anchor = "start", rotate], i) => (
        <text
          key={i}
          transform={`translate(${mapX(s, x)} ${mapY(y)})${rotate ? ` rotate(${rotate})` : ""}`}
          fontSize={size}
          textAnchor={anchor}
          fill={color}
          stroke="#6b6b6b"
          strokeOpacity="0.5"
          strokeWidth="2"
          paintOrder="stroke"
        >
          {text}
        </text>
      ))}
      {PINS.map(([s, x, y, color, glyph], i) => (
        <g key={i} transform={`translate(${mapX(s, x)} ${mapY(y)})`}>
          <path d="M0,0C-1,-7 -10,-11 -10,-19A10,10 0 0 1 10,-19C10,-11 1,-7 0,0Z" fill={color} />
          <path d={GLYPHS[glyph]} fill="none" stroke="#8b8b8b" strokeWidth="1.500" />
        </g>
      ))}
      {/* Watermark rows */}
      <g fill="#ffffff" fillOpacity="0.5" fontFamily="'Liberation Sans', Arial, sans-serif" fontSize="15">
        {[75, 331].map((y) =>
          [-143, 113, 369, 625, 881, 1137, 1393, 1649].map((x) => (
            <text key={`${x}-${y}`} x={x} y={y}>
              For development purposes only
            </text>
          )),
        )}
      </g>
      {/* Shop marker */}
      <path
        fillRule="evenodd"
        d="M951,246C946,228 929,215 929,204A22,22 0 0 1 973,204C973,215 956,228 951,246ZM951,193A11,11 0 1 0 951,215A11,11 0 1 0 951,193Z"
        fill="#f7941d"
      />
    </svg>
  );
}

/* ------------------------------------------------------------------ */
/* Shared bits                                                          */
/* ------------------------------------------------------------------ */

function Container({ className = "", children }: { className?: string; children: React.ReactNode }) {
  return <div className={`mx-auto w-full max-w-[1170px] px-[15px] ${className}`}>{children}</div>;
}

function Logo({ className }: { className: string }) {
  return (
    <a href="#" className={`block text-[32px] leading-8 font-extrabold ${className}`}>
      Eshop<span className="text-[#f7941d]">.</span>
    </a>
  );
}

function Heart() {
  return (
    <svg viewBox="0 0 20 20" className="size-5" fill="none" stroke="#333" strokeWidth="1.600" strokeLinejoin="round" aria-hidden="true">
      <path d="M10 18.200L2.400 10.300C0 7.500 .5 4 3 2.700C5.500 1.500 8.300 2.400 10 5C11.700 2.400 14.500 1.500 17 2.700C19.500 4 20 7.500 17.600 10.300Z" />
    </svg>
  );
}

function UserCircle() {
  return (
    <svg viewBox="0 0 20 20" className="size-5" aria-hidden="true">
      <circle cx="10" cy="10" r="9" fill="none" stroke="#333" strokeWidth="1.500" />
      <circle cx="10" cy="8" r="4.200" fill="#333" />
      <path d="M3.500 15.500C4 12.500 5.500 11.500 6.500 11.300Q10 14 13.500 11.300C14.500 11.500 16 12.500 16.500 15.500Q14 19 10 19T3.500 15.500Z" fill="#333" />
    </svg>
  );
}

function TopBar() {
  const links = [
    { icon: <TfiLocationPin />, text: "Store location", strong: true },
    { icon: <TfiAlarmClock />, text: "Daily deal" },
    { icon: <TfiUser />, text: "Anish Shilpakar" },
    { icon: <TfiPowerOff />, text: "Log Out" },
  ];
  return (
    <div className="border-b border-[#eee] pt-3 pb-[13px]">
      <Container className="flex justify-between">
        <ul className="text-[13px] leading-6 font-medium">
          <li className="flex w-fit items-center gap-2 border-r border-[#eee] pr-[14px]">
            <TfiHeadphoneAlt className="size-4 text-[#f7941d]" strokeWidth={0.4} />
            +060 (800) 801-582
          </li>
          <li className="ml-3 flex items-center gap-2">
            <TfiEmail className="size-4 text-[#f7941d]" strokeWidth={0.4} />
            support@shophub.com
          </li>
        </ul>
        <ul className="flex h-6 text-[13px] leading-6">
          {links.map((l, i) => (
            <li key={l.text} className={i < 3 ? "mr-4 border-r border-[#eee] pr-[14px]" : ""}>
              <a href="#" className={`flex items-center gap-2.5 ${l.strong ? "font-medium" : ""}`}>
                <span className="text-[15px] text-[#f7941d]">{l.icon}</span>
                {l.text}
              </a>
            </li>
          ))}
        </ul>
      </Container>
    </div>
  );
}

function Header() {
  return (
    <Container className="flex h-[107px] items-center">
      <div className="w-[302px]">
        <Logo className="text-[#0b0b14]" />
      </div>
      <form className="flex h-[50px] w-[536px] rounded-[5px]" onSubmit={(e) => e.preventDefault()}>
        <div className="relative flex w-[151px] items-center rounded-l-[5px] border border-[#ececec]">
          <select aria-label="Category" className="h-full w-full appearance-none bg-transparent pt-[3px] pl-5 text-sm outline-none">
            <option>All Category</option>
          </select>
          <svg viewBox="0 0 12 8" className="pointer-events-none absolute right-[17px] h-2 w-3" fill="none" stroke="#555" strokeWidth="2" aria-hidden="true">
            <path d="M1 1L6 6.500L11 1" />
          </svg>
        </div>
        <input
          aria-label="Search products"
          placeholder="Search Products Here....."
          className="min-w-0 flex-1 border-y border-[#ececec] px-5 text-sm outline-none placeholder:text-[#aaa]"
        />
        <button type="submit" aria-label="Search" className="flex w-[62px] items-center justify-center rounded-r-[5px] bg-[#333] text-white">
          <TfiSearch className="size-[18px]" strokeWidth={0.4} />
        </button>
      </form>
      <div className="ml-auto flex items-center gap-[29px] pb-1 text-[#333]">
        <a href="#" aria-label="Wishlist"><Heart /></a>
        <a href="#" aria-label="Account"><UserCircle /></a>
        <a href="#" aria-label="Cart" className="relative">
          <TfiBag className="size-5" strokeWidth={0.3} />
          <span className="absolute -top-2.5 -right-3.5 flex size-[18px] items-center justify-center rounded-full bg-[#f7941d] text-[11px] text-white">0</span>
        </a>
      </div>
    </Container>
  );
}

function Nav() {
  const item = "flex h-16 items-center px-[15px]";
  return (
    <nav className="bg-[#333] text-base font-medium text-white">
      <Container className="flex gap-[5px]">
        <a href="#" className={item}>Home</a>
        <a href="#" className={item}>Product</a>
        <a href="#" className={item}>Categories</a>
        <a href="#" className={`${item} relative gap-1.5`}>
          Shop
          <TfiAngleDown className="size-[10px]" strokeWidth={0.8} />
          <span className="absolute top-0.5 left-[21px] flex h-[18px] w-[38px] items-center justify-center bg-[#f7941d] text-[9px] font-semibold">
            NEW
            <svg viewBox="0 0 8 4" className="absolute top-full left-1 h-1 w-2" aria-hidden="true"><path d="M0 0H8L4 4Z" fill="#f7941d" /></svg>
          </span>
        </a>
        <a href="#" className={`${item} gap-1.5`}>
          Blog
          <TfiAngleDown className="size-[10px]" strokeWidth={0.8} />
        </a>
        <a href="#" className={`${item} bg-[#f7941d]`}>Contact Us</a>
      </Container>
    </nav>
  );
}

function FieldLabel({ id, label }: { id: string; label: string }) {
  return (
    <label htmlFor={id} className="block pb-2 text-sm leading-6">
      {label} <span className="text-[#ff2c18]">*</span>
    </label>
  );
}

function Field({ id, label }: { id: string; label: string }) {
  return (
    <div>
      <FieldLabel id={id} label={label} />
      <input id={id} className="block h-12 w-full border border-[#e6e2f5] px-5 text-sm outline-none" />
    </div>
  );
}

function ContactItem({ icon, title, lines }: { icon: React.ReactNode; title: string; lines: string[] }) {
  return (
    <div>
      <span className="flex size-10 items-center justify-center rounded-[3px] bg-[#f7941d] text-white">{icon}</span>
      <h3 className="mt-[15px] mb-[9px] text-lg leading-[22px] font-medium">{title}</h3>
      {lines.map((l) => (
        <p key={l} className="text-sm leading-6 text-[#444]">{l}</p>
      ))}
    </div>
  );
}

function Contact() {
  const card = "bg-white p-[50px] shadow-[0_0_15px_rgba(0,0,0,0.1)]";
  return (
    <Container className="grid grid-cols-1 gap-[30px] py-[100px] lg:grid-cols-[750fr_360fr]">
      <section className={card}>
        <p className="text-lg leading-[22px] text-[#f7941d]">Get in touch</p>
        <h2 className="mb-[30px] pt-[3px] text-[25px] leading-[30px] font-semibold text-[#444]">Write Us A Message</h2>
        <form onSubmit={(e) => e.preventDefault()}>
          <div className="grid grid-cols-2 gap-x-[30px] gap-y-4">
            <Field id="name" label="Your Name" />
            <Field id="subject" label="Your Subjects" />
            <Field id="email" label="Your Email" />
            <Field id="phone" label="Your Phone" />
            <div className="col-span-2">
              <FieldLabel id="message" label="Your message" />
              <textarea id="message" className="block h-[180px] w-full resize-none border border-[#e6e2f5] p-4 text-sm outline-none" />
            </div>
          </div>
          <button type="submit" className="mt-[18px] block h-[50px] w-[167px] bg-[#333] text-[13px] font-medium text-white">
            SEND MESSAGE
          </button>
        </form>
      </section>
      <section className={`${card} flex flex-col gap-[30px]`}>
        <ContactItem icon={<FaPhoneAlt className="size-[14px]" />} title="Call us Now:" lines={["+123 456-789-1120", "+522 672-452-1120"]} />
        <ContactItem icon={<FaEnvelopeOpen className="size-[18px]" />} title="Email:" lines={["info@yourwebsite.com", "support@yourwebsite.com"]} />
        <ContactItem icon={<FaLocationArrow className="size-[14px]" />} title="Our Address:" lines={["KA-62/1, Travel Agency, 45 Grand", "Central Terminal, New York."]} />
      </section>
    </Container>
  );
}

function MapSection() {
  return (
    <section className="relative h-[500px] overflow-hidden font-[Roboto]">
      <MapDrawing />
      <div className="absolute top-[5px] left-1/2 h-[163px] w-[375px] -translate-x-1/2 rounded-[5px] bg-white px-[26px] pt-4 shadow">
        <p className="font-['Open_Sans'] text-[17px] leading-6 text-[#5f6368]">Google</p>
        <p className="mt-3.5 text-sm leading-5 font-medium text-black/90">This page can't load Google Maps correctly.</p>
        <div className="mt-4 flex items-center justify-between">
          <a href="#" className="text-xs text-[#757575]">Do you own this website?</a>
          <button type="button" className="h-9 w-[68px] rounded-[3px] border border-[#dadce0] text-sm font-medium text-[#1a73e8]">OK</button>
        </div>
      </div>
      <button type="button" aria-label="Toggle fullscreen view" className="absolute top-[10px] right-[10px] flex size-10 items-center justify-center rounded-[2px] bg-white">
        <svg viewBox="0 0 18 18" className="size-[18px]" fill="none" stroke="#666" strokeWidth="2" aria-hidden="true">
          <path d="M1 6V1H6M12 1H17V6M17 12V17H12M6 17H1V12" />
        </svg>
      </button>
      <span className="absolute bottom-0 left-[5px] font-['Open_Sans'] text-[19px] leading-7 font-semibold text-white">Google</span>
      <div className="absolute right-0 bottom-0 flex h-[14px] bg-[#cfcfcf] text-[10px] leading-[16px] text-black">
        <button type="button" className="px-[5px]">Keyboard shortcuts</button>
        <span className="border-l border-[#666] px-[5px]">Map data ©2021 Google</span>
        <span className="flex border-l border-[#666] px-[5px]">
          200 m
          <span className="mt-1 ml-1 h-[7px] w-[74px] border-2 border-t-0 border-[#666] outline outline-white/60" />
        </span>
        <a href="#" className="border-l border-[#666] px-[5px]">Terms of Use</a>
      </div>
    </section>
  );
}

function Newsletter() {
  return (
    <Container className="py-[100px] text-center">
      <h4 className="text-base leading-[22px] font-semibold">NEWSLETTER</h4>
      <p className="pt-1 text-sm leading-6 text-[#777]">
        Subscribe to our newsletter and get <span className="text-[#f7941d]">10%</span> off your first purchase
      </p>
      <form className="mx-auto mt-[30px] flex h-[55px] w-full max-w-[615px] -translate-x-0.5" onSubmit={(e) => e.preventDefault()}>
        <input
          type="email"
          aria-label="Email address"
          placeholder="Your email address"
          className="min-w-0 flex-1 rounded-l-[28px] border border-r-0 border-[#eee] px-[30px] text-sm outline-none placeholder:text-[#aaa]"
        />
        <button type="submit" className="w-[135px] rounded-r-[28px] bg-[#f7941d] text-[13px] font-medium text-white">SUBSCRIBE</button>
      </form>
    </Container>
  );
}

function ColumnTitle({ children }: { children: string }) {
  return <h4 className="pb-[29px] text-lg leading-6 font-semibold whitespace-nowrap">{children}</h4>;
}

function LinkColumn({ title, links }: { title: string; links: string[] }) {
  return (
    <div>
      <ColumnTitle>{title}</ColumnTitle>
      <ul className="flex flex-col gap-2 text-[15px] leading-6">
        {links.map((l) => (
          <li key={l}><a href="#">{l}</a></li>
        ))}
      </ul>
    </div>
  );
}

function PaymentCards() {
  return (
    <div className="flex gap-4">
      <svg viewBox="0 0 32 20" className="h-5 w-8" role="img" aria-label="Visa">
        <rect x="1" y="1" width="30" height="18" fill="#f8f8f8" />
        <text x="16" y="13" fontSize="9" fontWeight="800" fontStyle="italic" textAnchor="middle" fill="#1565a8">VISA</text>
        <path d="M4 6h3l1 4z" fill="#f2a134" />
      </svg>
      <svg viewBox="0 0 32 20" className="h-5 w-8" role="img" aria-label="Mastercard">
        <rect width="32" height="20" rx="1" fill="#000" />
        <circle cx="12" cy="8" r="6.500" fill="#eb1c24" />
        <circle cx="20" cy="8" r="6.500" fill="#f79e1b" />
        <path d="M16 2.900a6.500 6.500 0 0 1 0 10.200a6.500 6.500 0 0 1 0-10.200Z" fill="#f26122" />
        <text x="16" y="18" fontSize="4" fontWeight="600" textAnchor="middle" fill="#ddd">mastercard</text>
      </svg>
      <svg viewBox="0 0 32 20" className="h-5 w-8" role="img" aria-label="PayPal">
        <rect x="1" y="1" width="30" height="18" fill="#f8f8f8" />
        <path d="M14 2h4q4 1 2 5q-1 2-4 2l-1 3h-3z" fill="#22387e" />
        <path d="M20 4q2 5-4 6l-1 3h-2l1-4q5 0 6-5z" fill="#259bd6" />
        <text x="16" y="17" fontSize="5" fontWeight="700" fontStyle="italic" textAnchor="middle" fill="#22387e">Pay<tspan fill="#259bd6">Pal</tspan></text>
      </svg>
      <svg viewBox="0 0 32 20" className="h-5 w-8" role="img" aria-label="American Express">
        <rect width="32" height="20" fill="#2f7cc4" />
        <rect x="3" y="5" width="24" height="5" fill="#a9cdec" />
        <rect x="8" y="10" width="21" height="4" fill="#a9cdec" />
        <text x="15" y="9" fontSize="4" fontWeight="800" textAnchor="middle" fill="#2f7cc4">AMERICAN</text>
        <text x="18" y="13" fontSize="4" fontWeight="800" textAnchor="middle" fill="#2f7cc4">EXPRESS</text>
      </svg>
      <svg viewBox="0 0 32 20" className="h-5 w-8" role="img" aria-label="Visa Electron">
        <rect width="32" height="20" rx="1" fill="#0b66b2" />
        <text x="16" y="11" fontSize="8" fontWeight="800" fontStyle="italic" textAnchor="middle" fill="#fff">VISA</text>
        <text x="16" y="16" fontSize="4" fontWeight="700" textAnchor="middle" fill="#cfe2f3">Electron</text>
        <path d="M6 4h3l1 3z" fill="#f2a134" />
      </svg>
      <svg viewBox="0 0 32 20" className="h-5 w-8" role="img" aria-label="Apple Pay">
        <rect x="1" y="1" width="31" height="18" fill="#fff" />
        <path d="M5 7q2-1 3 0q2-1 3 0q-1 2 .5 4q-1 3-2 3t-1.500 0t-1.500 0q-1 0-2-2q-1-4 .5-5zM8 6q0-2 2-2q0 2-2 2z" fill="#222" />
        <text x="20" y="13" fontSize="9" fontWeight="500" textAnchor="middle" fill="#222">Pay</text>
      </svg>
    </div>
  );
}

function Footer() {
  return (
    <footer className="bg-[#222] pt-[98px] text-white">
      <Container>
        <div className="grid min-h-[315px] grid-cols-[488fr_195fr_195fr_262fr]">
          <div>
            <Logo className="text-white" />
            <p className="mt-[23px] max-w-[407px] text-[15px] leading-6">
              Praesent dapibus, neque id cursus ucibus, tortor neque egestas augue, magna eros eu erat. Aliquam erat volutpat. Nam dui mi, tincidunt quis, accumsan porttitor, facilisis luctus, metus.
            </p>
            <p className="mt-[14px] text-[15px] leading-6">
              Got Question? Call us 24/7
              <a href="tel:0123456789" className="block text-xl leading-6 font-semibold text-[#f7941d]">+0123 456 789</a>
            </p>
          </div>
          <LinkColumn title="Information" links={["About Us", "Faq", "Terms & Conditions", "Contact Us", "Help"]} />
          <LinkColumn title="Customer Service" links={["Payment Methods", "Money-back", "Returns", "Shipping", "Privacy Policy"]} />
          <div>
            <ColumnTitle>Get In Tuch</ColumnTitle>
            <ul className="flex flex-col gap-1 text-sm leading-6">
              <li>NO. 342 - London Oxford Street.</li>
              <li>012 United Kingdom.</li>
              <li>info@eshop.com</li>
              <li>+032 3456 7890</li>
            </ul>
            <div className="mt-[23px] flex gap-[29px]">
              <a href="#" aria-label="Facebook"><TfiFacebook className="size-4" /></a>
              <a href="#" aria-label="Twitter"><TfiTwitter className="size-4" strokeWidth={0.4} /></a>
              <a href="#" aria-label="Flickr"><TfiFlickr className="size-4" strokeWidth={0.4} /></a>
              <a href="#" aria-label="Instagram"><TfiInstagram className="size-4" strokeWidth={0.4} /></a>
            </div>
          </div>
        </div>
        <div className="flex h-[65px] items-center justify-between border-t border-[#555] text-sm">
          <p>Copyright © 2020 <a href="#" className="underline">Wpthemesgrid</a> - All Rights Reserved.</p>
          <PaymentCards />
        </div>
      </Container>
    </footer>
  );
}

export default function App() {
  return (
    <div className="bg-white font-[Inter,sans-serif] text-[#333]">
      <TopBar />
      <Header />
      <Nav />
      <div role="alert" className="mb-4 flex h-[50px] items-center justify-between rounded-[4px] border border-[#c3e6cb] bg-[#d4edda] px-5 text-[#155724]">
        <strong className="text-[15px] font-semibold">Your Message has been received, you can check your mail for confirmation</strong>
        <button type="button" aria-label="Close" className="text-2xl font-bold text-[#6a7c6e]">×</button>
      </div>
      <div className="bg-[#f6f7fb]">
        <Container className="flex h-[84px] items-center text-sm">
          <a href="#">Home</a>
          <TfiArrowRight className="mr-3.5 ml-3 size-[10px]" />
          <a href="#">Contact</a>
        </Container>
      </div>
      <Contact />
      <MapSection />
      <Newsletter />
      <Footer />
    </div>
  );
}
